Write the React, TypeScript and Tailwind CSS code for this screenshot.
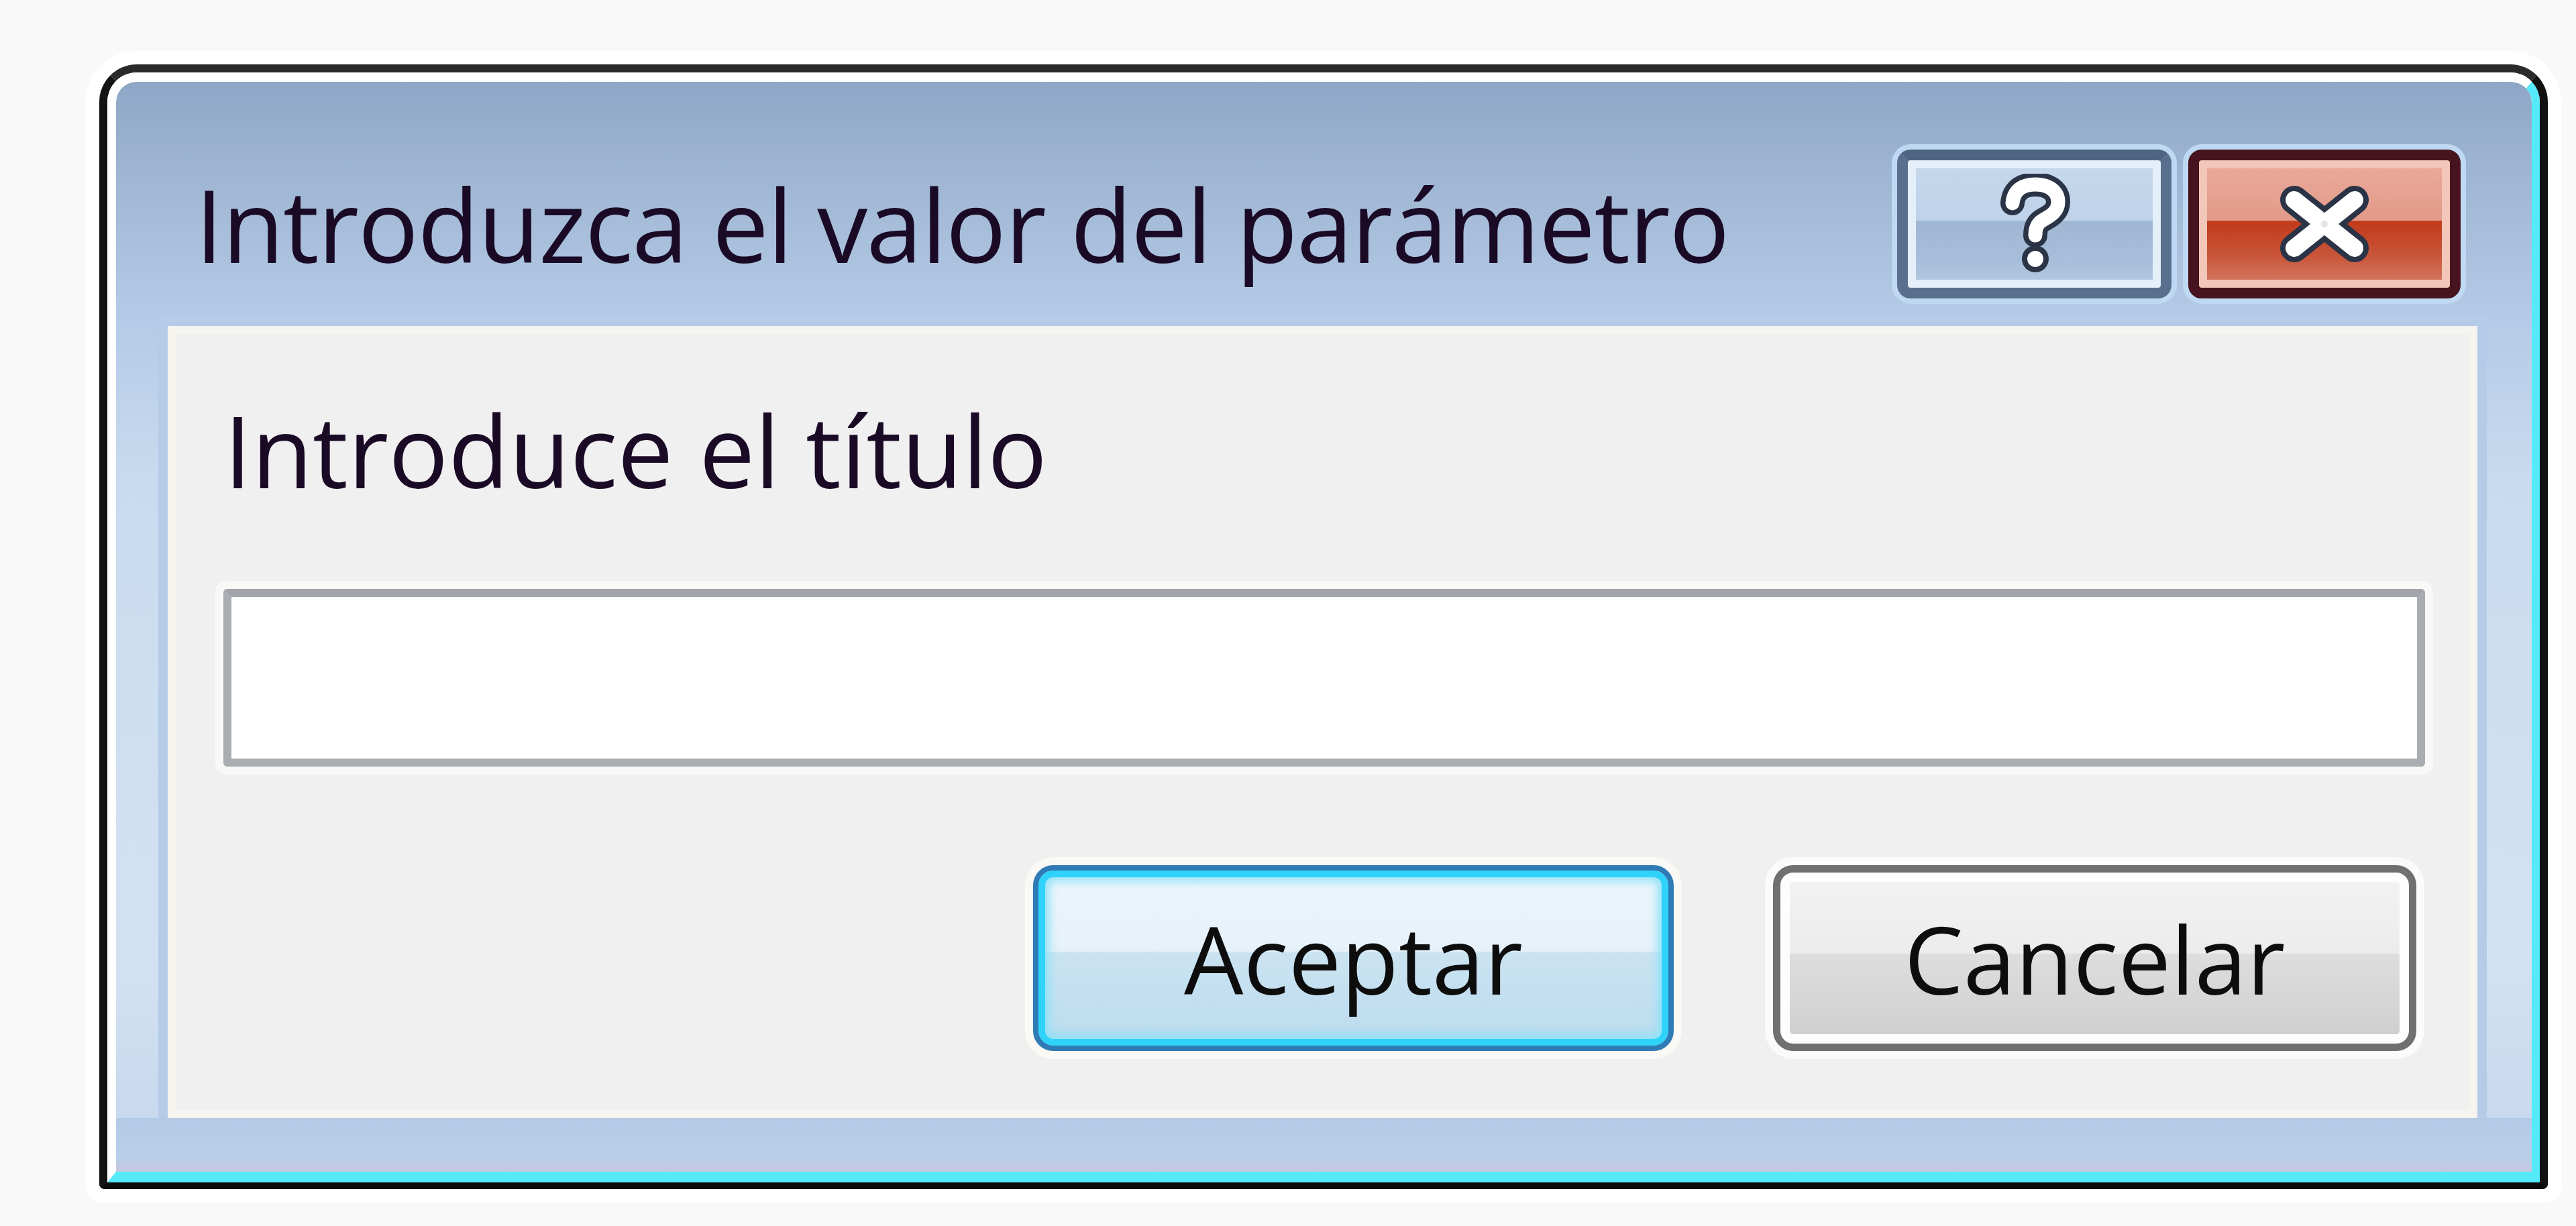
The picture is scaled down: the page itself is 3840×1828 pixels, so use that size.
import React from "react";

function HelpGlyph() {
  const d = "M22 44 C24 22 40 16 56 16 C76 16 90 26 90 42 C90 58 76 64 66 70 C58 75 56 82 56 92";
  return (
    <svg width="110" height="150" viewBox="0 0 110 150">
      <path d={d} fill="none" stroke="#2a3446" strokeWidth="36" strokeLinecap="round" strokeLinejoin="round" />
      <circle cx="56" cy="127" r="20" fill="#2a3446" />
      <path d={d} fill="none" stroke="#ffffff" strokeWidth="21" strokeLinecap="round" strokeLinejoin="round" />
      <circle cx="56" cy="127" r="12" fill="#ffffff" />
    </svg>
  );
}

function CloseGlyph() {
  return (
    <svg width="144" height="116" viewBox="0 0 144 116">
      <g stroke="#2a3446" strokeWidth="42" strokeLinecap="round">
        <line x1="27" y1="22" x2="117" y2="94" />
        <line x1="117" y1="22" x2="27" y2="94" />
      </g>
      <g stroke="#ffffff" strokeWidth="26" strokeLinecap="round">
        <line x1="27" y1="22" x2="117" y2="94" />
        <line x1="117" y1="22" x2="27" y2="94" />
      </g>
      <circle cx="72" cy="58" r="5" fill="#e4e4e4" />
    </svg>
  );
}

export default function App() {
  return (
    <div className="w-[3840px] h-[1828px] bg-[#f9f9f9] pl-[148px] pt-[96px] font-['Open_Sans','Noto_Sans',sans-serif] overflow-hidden">
      <div className="w-[3650px] h-[1677px] rounded-t-[56px] rounded-b-[8px] border-t-[12px] border-l-[12px] border-r-[12px] border-b-[10px] border-t-[#2a2a2a] border-l-[#141414] border-r-[#111111] border-b-[#0c0c0c] bg-white shadow-[0_0_0_20px_#ffffff]">
        <div className="h-full rounded-t-[44px] border-t-[14px] border-l-[13px] border-r-[12px] border-b-[16px] border-t-white border-l-white border-r-[#55eaf9] border-b-[#55eaf9] overflow-hidden">
          <div className="h-full flex flex-col rounded-t-[30px] overflow-hidden bg-[linear-gradient(to_bottom,#8ea7c6_0px,#a3bad7_180px,#b5cbe7_364px,#c9dbef_600px,#d3e2f2_1300px,#c8d9ee_1545px)]">
            {/* Title bar */}
            <div className="h-[364px] flex items-start shrink-0">
              <div className="flex-1 pl-[118px] pt-[137px] text-[150px] font-medium leading-none tracking-[-1.5px] text-[#1a0a26] whitespace-nowrap">
                Introduzca el valor del parámetro
              </div>
              <div className="flex gap-[25px] mt-[101px] mr-[106px]">
                <div className="w-[409px] h-[222px] rounded-[20px] border-[16px] border-[#5a6f8e] border-t-[#4f6383] shadow-[0_0_0_8px_#c0d9f3,inset_0_0_0_12px_#e4eff9] bg-[linear-gradient(to_bottom,#c6d8ec_0%,#bfd2e9_47%,#9fb6d3_48%,#a8bfdb_80%,#b4cae4_100%)] flex items-center justify-center">
                  <HelpGlyph />
                </div>
                <div className="w-[406px] h-[222px] rounded-[20px] border-[16px] border-[#47131f] shadow-[0_0_0_8px_#c0d9f3,inset_0_0_0_12px_#f2c6b8] bg-[linear-gradient(to_bottom,#eaab9c_0%,#e29a89_47%,#c13a1b_48%,#c9563a_75%,#d67c67_100%)] flex items-center justify-center">
                  <CloseGlyph />
                </div>
              </div>
            </div>
            {/* Middle: client area */}
            <div className="h-[1181px] flex shrink-0">
              <div className="w-[3443px] ml-[77px] h-full border-[12px] border-[#f6f4ef] bg-[#f0f0f0] shadow-[0_0_0_14px_#b5cbe7] flex flex-col">
                <div className="pt-[99px] pl-[72px] text-[148px] font-medium leading-none text-[#1a0a26] whitespace-nowrap">
                  Introduce el título
                </div>
                <div className="mt-[133px] ml-[71px] mr-[66px] h-[265px] bg-white border-[12px] border-[#a9acb0] border-t-[#a2a5aa] rounded-[6px] shadow-[0_0_0_12px_#f8f8f6]"></div>
                <div className="mt-[147px] h-[277px] flex justify-end gap-[148px] pr-[79px]">
                  <div className="w-[955px] h-full rounded-[30px] border-[8px] border-[#2f7bb5] shadow-[0_0_0_12px_#fbf9f5,inset_0_0_0_10px_#2fd3f9,inset_0_0_14px_16px_#8fe2f8] bg-[linear-gradient(to_bottom,#edf5fc_0%,#e6f1fa_46%,#cae3f1_47%,#c0deef_85%,#b4d8ee_100%)] flex items-center justify-center text-[140px] font-medium leading-none text-[#0d0d0d]">
                    Aceptar
                  </div>
                  <div className="w-[959px] h-full rounded-[30px] border-[11px] border-[#707070] shadow-[0_0_0_12px_#fbfbfb,inset_0_0_0_14px_#fdfdfd] bg-[linear-gradient(to_bottom,#f3f3f3_0%,#ececec_47%,#dddddd_48%,#d3d3d3_85%,#cdcdcd_100%)] flex items-center justify-center text-[140px] font-medium leading-none text-[#0d0d0d]">
                    Cancelar
                  </div>
                </div>
              </div>
            </div>
            {/* Bottom frame */}
            <div className="h-[80px] shrink-0 bg-[linear-gradient(to_bottom,#b3cae6_0%,#b9cfea_75%,#c9c5df_100%)]"></div>
          </div>
        </div>
      </div>
    </div>
  );
}
